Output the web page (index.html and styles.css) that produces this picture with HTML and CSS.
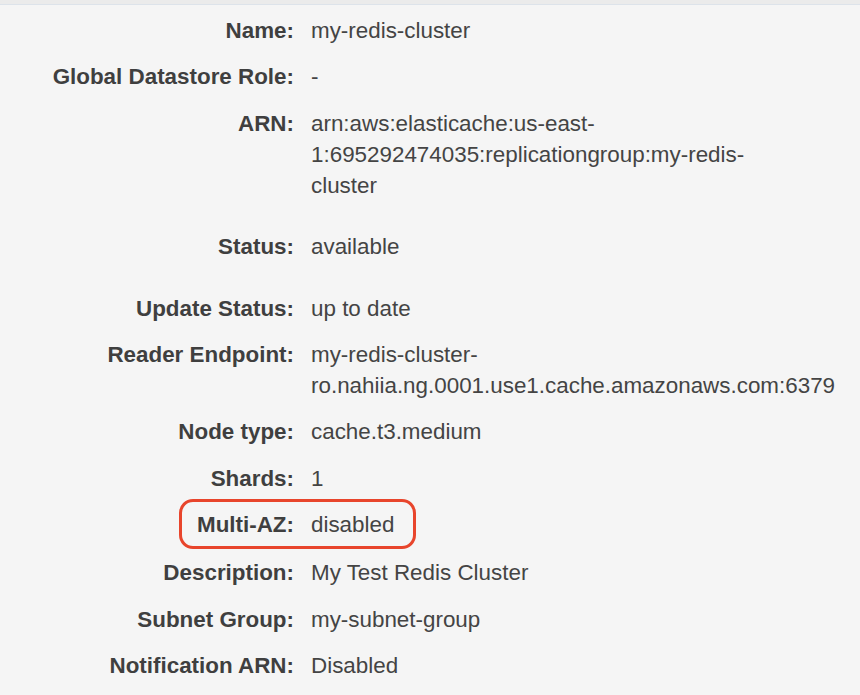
FILE: index.html
```html
<!DOCTYPE html>
<html lang="en">
<head>
    <meta charset="UTF-8">
    <meta name="viewport" content="width=device-width, initial-scale=1.0">
    <title>my-redis-cluster - Details</title>
    <link rel="stylesheet" href="styles.css">
</head>
<body>

    <div class="topbar"></div>

    <div class="details">
        <div class="row">
            <div class="label">Name:</div>
            <div class="value">my-redis-cluster</div>
        </div>
        <div class="row">
            <div class="label">Global Datastore Role:</div>
            <div class="value">-</div>
        </div>
        <div class="row row-spaced">
            <div class="label">ARN:</div>
            <div class="value">arn:aws:elasticache:us-east-<br>1:695292474035:replicationgroup:my-redis-<br>cluster</div>
        </div>
        <div class="row row-spaced">
            <div class="label">Status:</div>
            <div class="value">available</div>
        </div>
        <div class="row">
            <div class="label">Update Status:</div>
            <div class="value">up to date</div>
        </div>
        <div class="row">
            <div class="label">Reader Endpoint:</div>
            <div class="value">my-redis-cluster-<br>ro.nahiia.ng.0001.use1.cache.amazonaws.com:6379</div>
        </div>
        <div class="row">
            <div class="label">Node type:</div>
            <div class="value">cache.t3.medium</div>
        </div>
        <div class="row">
            <div class="label">Shards:</div>
            <div class="value">1</div>
        </div>
        <div class="row row-marked">
            <span class="mark"></span>
            <div class="label">Multi-AZ:</div>
            <div class="value">disabled</div>
        </div>
        <div class="row">
            <div class="label">Description:</div>
            <div class="value">My Test Redis Cluster</div>
        </div>
        <div class="row">
            <div class="label">Subnet Group:</div>
            <div class="value">my-subnet-group</div>
        </div>
        <div class="row">
            <div class="label">Notification ARN:</div>
            <div class="value">Disabled</div>
        </div>
    </div>

</body>
</html>
```

FILE: styles.css
```css
body {
    font-family: 'Liberation Sans', Arial, sans-serif;
    margin: 0;
    padding: 0;
    background-color: #f5f5f5;
    color: #444;
}
.topbar {
    height: 4px;
    background: #ebebeb;
    border-bottom: 1px solid #dde3ea;
}
.details {
    padding-top: 10px;
}
.row {
    display: flex;
    font-size: 22.4px;
    line-height: 31px;
    margin-bottom: 15.4px;
}
.row-spaced {
    margin-bottom: 30.4px;
}
.row-marked {
    position: relative;
    margin-bottom: 17px;
}
.label {
    width: 294px;
    flex-shrink: 0;
    text-align: right;
    font-weight: bold;
    color: #3f3f3f;
}
.value {
    padding-left: 17px;
}
.mark {
    position: absolute;
    left: 179px;
    top: -10px;
    width: 231px;
    height: 44px;
    border: 3px solid #e8452c;
    border-radius: 14px;
}
```
